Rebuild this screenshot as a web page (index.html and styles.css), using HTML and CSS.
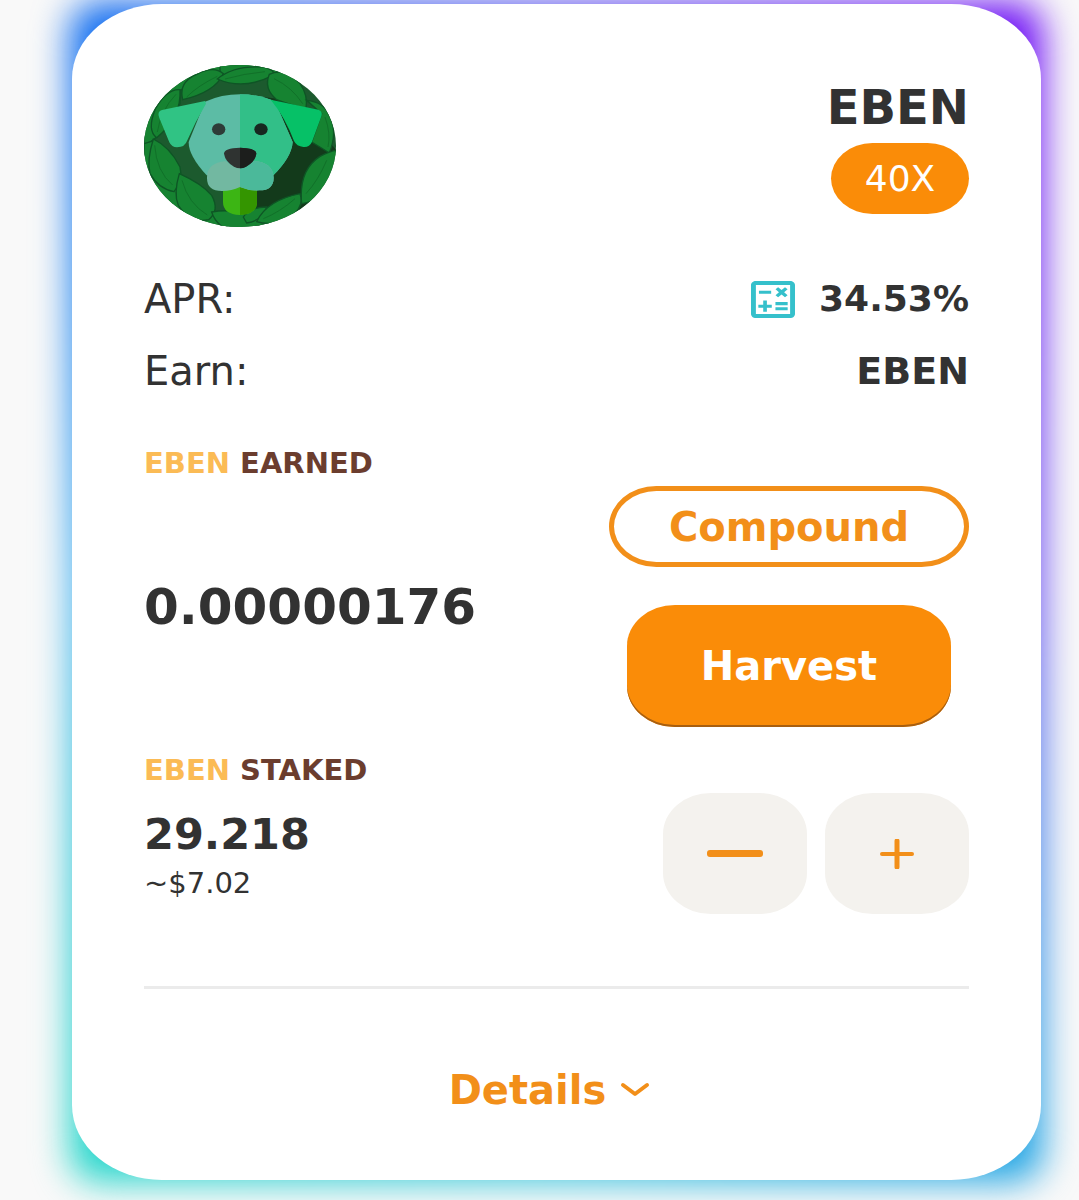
FILE: index.html
```html
<!DOCTYPE html>
<html lang="en">
<head>
    <meta charset="UTF-8">
    <meta name="viewport" content="width=device-width, initial-scale=1.0">
    <title>EBEN Pool</title>
    <link rel="stylesheet" href="styles.css">
</head>
<body>
    <main class="page">
    <div class="card">
        <header class="card-header">
            <svg class="logo" viewBox="42 44 576 486" preserveAspectRatio="none" role="img" aria-label="EBEN logo">
                <defs>
                    <clipPath id="badge"><ellipse cx="330" cy="287" rx="288" ry="243"/></clipPath>
                    <clipPath id="right-half"><rect x="330" y="44" width="288" height="486"/></clipPath>
                </defs>
                <g clip-path="url(#badge)">
                    <rect x="42" y="44" width="576" height="486" fill="#1c5a2e"/>
                    <path d="M330 132 L480 150 L620 300 L520 480 L330 500Z" fill="#133a1b"/>
                    <!-- leaf wreath -->
                    <g fill="#168331" stroke="#0e5525" stroke-width="4">
                        <path d="M42 44 H330 L270 80 Q200 90 150 120 L150 160 L80 260 L42 290Z"/>
                        <path d="M270 40 H460 L430 78 Q350 70 270 80Z"/>
                        <path d="M42 280 L75 270 L150 380 L250 480 L300 540 H42Z"/>
                        <path d="M158 148 Q145 95 200 72 Q250 45 280 70 Q255 125 158 148Z"/>
                        <path d="M262 86 Q310 45 400 50 Q440 60 428 76 Q340 120 262 86Z"/>
                        <path d="M418 72 Q465 50 510 100 Q535 135 528 176 Q470 160 440 148 Q400 115 418 72Z"/>
                        <path d="M530 150 Q580 155 595 190 Q625 240 598 308 Q570 290 545 275 L575 190Z"/>
                        <path d="M76 176 Q110 115 150 118 Q155 200 80 262 Q50 240 76 176Z"/>
                        <path d="M70 266 Q50 330 60 370 Q85 415 132 424 Q160 390 150 350 Q120 290 70 266Z"/>
                        <path d="M148 370 Q130 430 145 465 Q180 520 236 508 Q270 480 245 435 Q215 400 148 370Z"/>
                        <path d="M245 485 Q300 475 345 492 Q390 500 420 520 L300 545 Q255 520 245 485Z"/>
                        <path d="M340 500 Q360 470 410 470 Q400 510 350 518Z"/>
                        <path d="M380 514 Q410 450 510 430 Q525 470 480 500 Q430 530 380 514Z"/>
                        <path d="M515 460 Q505 360 570 318 Q605 300 620 300 V400 Q580 450 515 460Z"/>
                    </g>
                    <g fill="none" stroke="#117029" stroke-width="3">
                        <path d="M170 140 Q205 105 262 78 M285 86 Q340 70 405 64 M432 85 Q485 110 518 160 M82 245 Q92 180 138 132"/>
                        <path d="M74 285 Q80 365 128 404 M156 390 Q175 460 232 494 M400 505 Q450 485 495 445 M528 430 Q565 390 590 330 M585 200 Q603 250 594 290"/>
                    </g>
                    <!-- dog head -->
                    <path d="M225 154 Q275 132 330 132 Q390 132 435 154 L488 275 Q485 320 430 375 L230 375 Q175 315 176 275Z" fill="#5cbca5"/>
                    <path d="M330 132 Q390 132 435 154 L488 275 Q485 320 430 375 L330 375Z" fill="#32bf88"/>
                    <path d="M225 152 L96 179 Q80 184 88 203 L118 276 Q125 291 141 291 Q165 291 172 270 Q195 215 228 160Z" fill="#30c384"/>
                    <path d="M422 148 L565 178 Q582 184 572 204 L546 274 Q538 292 520 290 Q500 288 492 272 Q465 200 422 148Z" fill="#06c167"/>
                    <path d="M279 390 H381 V455 Q381 492 330 494 Q279 492 279 455Z" fill="#3cb514"/>
                    <path d="M330 390 H381 V455 Q381 492 330 494Z" fill="#349500"/>
                    <path d="M287 332 Q230 338 231 382 Q230 422 276 422 Q305 422 330 410 Q358 422 388 420 Q431 420 431 382 Q429 336 372 332 Q330 370 287 332Z" fill="#72b8a1"/>
                    <path d="M330 350 L372 332 Q429 336 431 382 Q431 420 388 420 Q358 422 330 410Z" fill="#4bb99a"/>
                    <path d="M282 310 Q282 293 330 292 Q379 293 379 310 Q375 334 348 349 Q330 358 312 349 Q286 334 282 310Z" fill="#2f3331"/>
                    <path d="M282 310 Q282 293 330 292 Q379 293 379 310 Q375 334 348 349 Q330 358 312 349 Q286 334 282 310Z" fill="#1c1e1c" clip-path="url(#right-half)"/>
                    <ellipse cx="266" cy="237" rx="20" ry="18" fill="#2e3b38"/>
                    <ellipse cx="393" cy="237" rx="20" ry="18" fill="#172720"/>
                </g>
            </svg>
            <div class="heading">
                <h1>EBEN</h1>
                <span class="tag">40X</span>
            </div>
        </header>

        <div class="row">
            <span>APR:</span>
            <span class="apr">
                <button class="calc" type="button" aria-label="ROI calculator">
                    <svg viewBox="3 3 18 18" preserveAspectRatio="none" width="44" height="37" fill="#35c0cb">
                        <path d="M19 3H5c-1.100 0-2 .9-2 2v14c0 1.100.9 2 2 2h14c1.100 0 2-.9 2-2V5c0-1.100-.9-2-2-2zm0 16H5V5h14v14z"/>
                        <path d="M6.250 7.720h5v1.500h-5zM13 15.750h5v1.500h-5zM13 13.250h5v1.500h-5zM8 18h1.500v-2h2v-1.500h-2v-2H8v2H6V16h2zM14.090 10.950l1.410-1.410 1.410 1.410 1.060-1.060-1.410-1.420 1.410-1.410L16.910 6 15.500 7.410 14.090 6l-1.060 1.060 1.410 1.410-1.410 1.420z"/>
                    </svg>
                </button>
                <strong>34.53%</strong>
            </span>
        </div>
        <div class="row">
            <span>Earn:</span>
            <strong class="token">EBEN</strong>
        </div>

        <section class="earned">
            <h2><span>EBEN</span> EARNED</h2>
            <div class="balance">
                <p class="amount">0.00000176</p>
                <div class="actions">
                    <button class="btn btn-outline" type="button">Compound</button>
                    <button class="btn btn-solid" type="button">Harvest</button>
                </div>
            </div>
        </section>

        <section class="staked">
            <h2><span>EBEN</span> STAKED</h2>
            <div class="balance">
                <div>
                    <p class="stake">29.218</p>
                    <p class="usd">~$7.02</p>
                </div>
                <div class="steppers">
                    <button class="step" type="button" aria-label="Unstake">
                        <svg width="56" height="8" viewBox="0 0 56 8"><rect width="56" height="7" rx="3" fill="#f28f19"/></svg>
                    </button>
                    <button class="step" type="button" aria-label="Stake">
                        <svg width="36" height="30" viewBox="0 0 36 30" stroke="#f28f19" stroke-linecap="round">
                            <path d="M3 15H33" stroke-width="4"/>
                            <path d="M18 2V28" stroke-width="5"/>
                        </svg>
                    </button>
                </div>
            </div>
        </section>

        <hr>
        <button class="details" type="button">
            Details
            <svg width="30" height="16" viewBox="0 0 30 16" fill="none" stroke="#f28f19" stroke-width="4" stroke-linecap="round" stroke-linejoin="round">
                <path d="M3 3L15 12L27 3"/>
            </svg>
        </button>
    </div>
    </main>
</body>
</html>
```

FILE: styles.css
```css
* {
    box-sizing: border-box;
}

body {
    margin: 0;
    background-color: #f9f9f9;
    font-family: "DejaVu Sans", Verdana, sans-serif;
    color: #323232;
}

h1, h2, p {
    margin: 0;
}

button {
    font-family: inherit;
    border: none;
    padding: 0;
    background: none;
    cursor: pointer;
}

svg {
    display: block;
}

.page {
    position: relative;
    z-index: 0;
    padding: 4px 38px 20px 72px;
    overflow: hidden;
}

.card {
    position: relative;
    padding: 61px 72px 63px;
    background-color: #fff;
    border-radius: 90px / 75px;
}

/* coloured glow behind the card */
.card::before {
    content: "";
    position: absolute;
    inset: -2px;
    z-index: -1;
    border-radius: 30px;
    filter: blur(18px);
    background: conic-gradient(#5a50f0, #7010f5 40deg, #6a50f0 90deg, #20a4e4 140deg, #38c4dc 180deg, #22d6ca 220deg, #48b4f0 270deg, #0c6cf0 320deg, #5a50f0);
}

.card-header {
    display: flex;
    justify-content: space-between;
    margin-bottom: 36px;
}

.logo {
    width: 192px;
    height: 162px;
}

.heading {
    display: flex;
    flex-direction: column;
    align-items: flex-end;
    padding-top: 12px;
}

h1 {
    font-size: 48px;
    line-height: 60px;
}

.tag {
    min-width: 138px;
    margin-top: 6px;
    border-radius: 42px / 36px;
    background-color: #fa8c08;
    color: #fff;
    font-size: 36px;
    line-height: 71px;
    text-align: center;
}

.row {
    display: flex;
    justify-content: space-between;
    align-items: center;
    font-size: 40px;
    line-height: 72px;
}

.apr {
    display: flex;
    align-items: center;
    gap: 24px;
    font-size: 36px;
}

.token {
    font-size: 38px;
}

h2 {
    font-size: 29px;
    line-height: 36px;
    color: #6b3d2e;
}

h2 span {
    color: #fbbb55;
}

.earned {
    margin-top: 38px;
}

.staked {
    margin-top: 25px;
}

.balance {
    display: flex;
    justify-content: space-between;
    align-items: center;
    margin-top: 5px;
}

.amount {
    font-size: 50px;
    font-weight: bold;
}

.stake {
    font-size: 43px;
    line-height: 58px;
    font-weight: bold;
}

.usd {
    font-size: 29px;
    line-height: 40px;
}

.actions {
    display: flex;
    flex-direction: column;
    align-items: center;
    gap: 38px;
}

.btn {
    font-size: 40px;
    font-weight: bold;
}

.btn-outline {
    width: 360px;
    height: 81px;
    border: 5px solid #f28f19;
    border-radius: 48px / 41px;
    color: #f28f19;
}

.btn-solid {
    width: 324px;
    height: 122px;
    border-radius: 48px / 41px;
    background-color: #fa8c08;
    box-shadow: inset 0 -2px 0 #a85f10;
    color: #fff;
}

.steppers {
    display: flex;
    gap: 18px;
}

.step {
    display: flex;
    align-items: center;
    justify-content: center;
    width: 144px;
    height: 121px;
    border-radius: 48px / 41px;
    background-color: #f4f2ee;
}

hr {
    height: 3px;
    margin: 72px 0 74px;
    border: none;
    background-color: #ebebeb;
}

.details {
    display: flex;
    align-items: center;
    gap: 14px;
    margin: 0 auto;
    padding-right: 14px;
    font-size: 40px;
    line-height: 54px;
    font-weight: bold;
    color: #f28f19;
}
```
